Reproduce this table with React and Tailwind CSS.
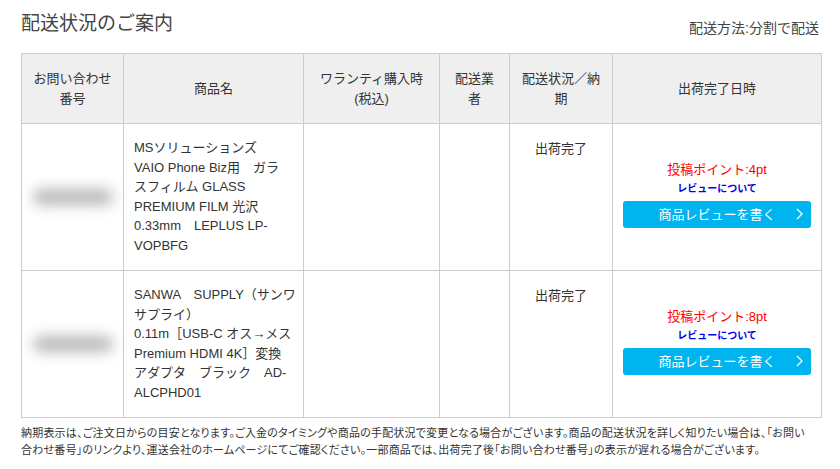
import React from "react";

const font = { fontFamily: '"Liberation Sans", "Noto Sans CJK JP", sans-serif' };

const rows = [
  {
    name: ["MSソリューションズ", "VAIO Phone Biz用　ガラ", "スフィルム GLASS", "PREMIUM FILM 光沢", "0.33mm　LEPLUS LP-", "VOPBFG"],
    status: "出荷完了",
    points: "4pt",
  },
  {
    name: ["SANWA　SUPPLY（サンワ", "サプライ）", "0.11m［USB-C オス→メス", "Premium HDMI 4K］変換", "アダプタ　ブラック　AD-", "ALCPHD01"],
    status: "出荷完了",
    points: "8pt",
  },
];

function ReviewBox({ points }) {
  return (
    <div className="flex flex-col items-center pb-[5px]">
      <p className="text-[13px] leading-[18px] text-[#ff0000]">投稿ポイント:{points}</p>
      <a className="mt-[3px] text-[10px] leading-[14px] font-bold text-[#0000ee]">レビューについて</a>
      <button className="mt-[5px] relative w-[188px] h-[27px] rounded-[3px] bg-[#00b4ef] text-white text-[13px]">
        商品レビューを書く
        <svg className="absolute right-[8px] top-[7px]" width="7" height="12" viewBox="0 0 7 12" fill="none">
          <path d="M1 1l5 5-5 5" stroke="white" strokeWidth="1.3" />
        </svg>
      </button>
    </div>
  );
}

export default function App() {
  return (
    <div className="w-[840px] h-[469px] bg-white text-[#333] overflow-hidden" style={font}>
      <div className="px-[21px] pt-[10px]">
        <div className="flex items-end justify-between">
          <h1 className="text-[19px] leading-[28px] text-[#444]">配送状況のご案内</h1>
          <p className="text-[14px] leading-[18px] text-[#444] mb-[1px]">配送方法:分割で配送</p>
        </div>
        <table className="mt-[15px] w-[800px] border-collapse table-fixed text-[13px]">
          <colgroup>
            <col className="w-[102px]" />
            <col className="w-[180px]" />
            <col className="w-[136px]" />
            <col className="w-[70px]" />
            <col className="w-[103px]" />
            <col className="w-[209px]" />
          </colgroup>
          <thead>
            <tr className="h-[70px] bg-[#efefef] text-center leading-[20px]">
              <th className="border border-[#cccccc] font-normal">お問い合わせ<br />番号</th>
              <th className="border border-[#cccccc] font-normal">商品名</th>
              <th className="border border-[#cccccc] font-normal">ワランティ購入時<br />(税込)</th>
              <th className="border border-[#cccccc] font-normal">配送業<br />者</th>
              <th className="border border-[#cccccc] font-normal">配送状況／納<br />期</th>
              <th className="border border-[#cccccc] font-normal">出荷完了日時</th>
            </tr>
          </thead>
          <tbody>
            {rows.map((r, i) => (
              <tr key={i} className="h-[147px]">
                <td className="border border-[#cccccc] align-middle">
                  <div className="mx-auto w-[80px] h-[16px] rounded-full bg-[#b8b8b8] blur-[7px]" />
                </td>
                <td className="border border-[#cccccc] align-top px-[10px] pt-[14px] leading-[19.5px]">
                  {r.name.map((l, j) => (
                    <span key={j} className="block whitespace-nowrap">{l}</span>
                  ))}
                </td>
                <td className="border border-[#cccccc]" />
                <td className="border border-[#cccccc]" />
                <td className="border border-[#cccccc] align-top text-center pt-[15px] leading-[19px]">{r.status}</td>
                <td className="border border-[#cccccc] align-middle">
                  <ReviewBox points={r.points} />
                </td>
              </tr>
            ))}
          </tbody>
        </table>
        <p className="mt-[7px] pr-[10px] text-[11px] leading-[17px] tracking-[0.2px] text-[#333]" style={{ fontFeatureSettings: '"palt"' }}>
          納期表示は、ご注文日からの目安となります。ご入金のタイミングや商品の手配状況で変更となる場合がございます。商品の配送状況を詳しく知りたい場合は、「お問い合わせ番号」のリンクより、運送会社のホームページにてご確認ください。一部商品では、出荷完了後「お問い合わせ番号」の表示が遅れる場合がございます。
        </p>
      </div>
    </div>
  );
}
